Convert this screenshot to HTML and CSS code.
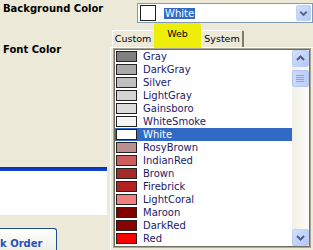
FILE: index.html
```html
<!DOCTYPE html>
<html lang="en">

<head>
    <meta charset="UTF-8">
    <meta name="viewport" content="width=device-width, initial-scale=1.0">
    <title>Color Picker</title>
    <link rel="stylesheet" href="styles.css">
</head>

<body>

    <div class="top-row">
        <div class="field-label">Background Color</div>
        <div class="combo">
            <span class="combo-swatch"></span>
            <span class="combo-text">White</span>
            <span class="combo-btn">
                <svg width="14" height="14" viewBox="0 0 14 14"><polyline points="3.5,5.5 7,9 10.5,5.5" fill="none" stroke="#4d6185" stroke-width="2"/></svg>
            </span>
        </div>
    </div>

    <div class="main">
        <!-- 左側：ラベルと下のパネル -->
        <div class="left-pane">
            <div class="field-label font-label">Font Color</div>
            <div class="blue-bar"></div>
            <div class="white-panel"></div>
            <button class="order-btn">k Order</button>
        </div>

        <!-- タブ付きの色リスト -->
        <div class="tab-control">
            <div class="tab-strip">
                <div class="tab tab-custom">Custom</div>
                <div class="tab tab-active">Web</div>
                <div class="tab tab-system">System</div>
            </div>
            <div class="tab-page">
                <div class="color-list">
                    <ul class="color-rows">
                        <li class="color-row"><span class="swatch" style="background:#808080"></span>Gray</li>
                        <li class="color-row"><span class="swatch" style="background:#a9a9a9"></span>DarkGray</li>
                        <li class="color-row"><span class="swatch" style="background:#c0c0c0"></span>Silver</li>
                        <li class="color-row"><span class="swatch" style="background:#d3d3d3"></span>LightGray</li>
                        <li class="color-row"><span class="swatch" style="background:#dcdcdc"></span>Gainsboro</li>
                        <li class="color-row"><span class="swatch" style="background:#f5f5f5"></span>WhiteSmoke</li>
                        <li class="color-row selected"><span class="swatch" style="background:#ffffff"></span>White</li>
                        <li class="color-row"><span class="swatch" style="background:#bc8f8f"></span>RosyBrown</li>
                        <li class="color-row"><span class="swatch" style="background:#cd5c5c"></span>IndianRed</li>
                        <li class="color-row"><span class="swatch" style="background:#a52a2a"></span>Brown</li>
                        <li class="color-row"><span class="swatch" style="background:#b22222"></span>Firebrick</li>
                        <li class="color-row"><span class="swatch" style="background:#f08080"></span>LightCoral</li>
                        <li class="color-row"><span class="swatch" style="background:#800000"></span>Maroon</li>
                        <li class="color-row"><span class="swatch" style="background:#8b0000"></span>DarkRed</li>
                        <li class="color-row"><span class="swatch" style="background:#ff0000"></span>Red</li>
                    </ul>
                    <div class="scrollbar">
                        <span class="scroll-btn">
                            <svg width="15" height="15" viewBox="0 0 15 15"><polyline points="4,9 7.5,5.5 11,9" fill="none" stroke="#4d6185" stroke-width="2"/></svg>
                        </span>
                        <span class="scroll-thumb">
                            <svg width="9" height="8" viewBox="0 0 9 8"><path d="M0 0.5h8M0 2.5h8M0 4.5h8M0 6.5h8" stroke="#8aa3e0" stroke-width="1"/></svg>
                        </span>
                        <span class="scroll-track"></span>
                        <span class="scroll-btn">
                            <svg width="15" height="15" viewBox="0 0 15 15"><polyline points="4,6 7.5,9.5 11,6" fill="none" stroke="#4d6185" stroke-width="2"/></svg>
                        </span>
                    </div>
                </div>
            </div>
        </div>
    </div>

</body>

</html>
```

FILE: styles.css
```css
body {
    margin: 0;
    width: 313px;
    height: 250px;
    overflow: hidden;
    background-color: #ece9d8;
    font-family: "DejaVu Sans", "Liberation Sans", sans-serif;
    font-size: 10px;
    color: #000;
}

/* 上の行 */
.top-row {
    display: flex;
    padding-top: 3px;
    height: 20px;
}

.field-label {
    width: 137px;
    padding-left: 3px;
    box-sizing: border-box;
    font-weight: bold;
    line-height: 12px;
}

.combo {
    width: 176px;
    height: 20px;
    box-sizing: border-box;
    border: 1px solid #7f9db9;
    background-color: #fff;
    display: flex;
    align-items: center;
}

.combo-swatch {
    width: 16px;
    height: 16px;
    box-sizing: border-box;
    border: 1px solid #222;
    margin-left: 2px;
    background-color: #fff;
}

.combo-text {
    margin-left: 8px;
    padding: 0 1px;
    line-height: 11px;
    background-color: #316ac5;
    color: #fff;
}

.combo-btn {
    margin-left: auto;
    margin-right: 1px;
    width: 15px;
    height: 16px;
    box-sizing: border-box;
    border: 1px solid #bcd0f8;
    border-radius: 2px;
    background: linear-gradient(135deg, #d3e0fd, #b4c8f6);
    display: flex;
    align-items: center;
    justify-content: center;
}

/* 下の部分 */
.main {
    display: flex;
}

.left-pane {
    width: 110px;
    display: flex;
    flex-direction: column;
}

.font-label {
    margin-top: 21px;
}

.blue-bar {
    width: 107px;
    height: 4px;
    margin-top: 111px;
    background: linear-gradient(#0a2fb4, #0f46d8);
}

.white-panel {
    width: 107px;
    height: 44px;
    background-color: #fff;
}

.order-btn {
    margin: 13px 0 0 -12px;
    width: 69px;
    height: 22px;
    box-sizing: border-box;
    padding: 8px 0 0 11px;
    border: 1px solid #1b4d8c;
    border-bottom: none;
    border-radius: 3px 3px 0 0;
    background: linear-gradient(#ffffff, #f0efe8);
    font-family: "DejaVu Sans", "Liberation Sans", sans-serif;
    font-size: 10px;
    font-weight: bold;
    line-height: 12px;
    color: #2553b8;
    text-align: left;
}

/* タブ */
.tab-control {
    width: 203px;
    display: flex;
    flex-direction: column;
}

.tab-strip {
    height: 24px;
    display: flex;
    align-items: flex-end;
    padding-left: 2px;
}

.tab {
    height: 17px;
    box-sizing: border-box;
    border-top: 1px solid #fff;
    border-left: 1px solid #fff;
    border-radius: 2px 2px 0 0;
    font-size: 9.5px;
    line-height: 16px;
    text-align: center;
}

.tab-custom {
    width: 41px;
}

.tab-active {
    width: 47px;
    height: 25px;
    margin-left: 1px;
    margin-bottom: -1px;
    padding-top: 3px;
    background-color: #eeee0a;
    border: none;
    position: relative;
}

.tab-system {
    width: 43px;
    border-right: 2px solid #7d7b70;
}

.tab-page {
    flex: 1;
    border-top: 1px solid #fff;
    border-left: 1px solid #fff;
    padding-left: 2px;
}

.color-list {
    width: 198px;
    height: 200px;
    box-sizing: border-box;
    border: 1px solid #aca899;
    padding: 1px;
    box-shadow: inset 0 0 0 1px #716f64;
    background-color: #fff;
    display: flex;
}

.color-rows {
    flex: 1;
    margin: 0;
    padding: 0;
    list-style: none;
    overflow: hidden;
}

.color-row {
    height: 13px;
    display: flex;
    align-items: center;
    line-height: 13px;
    color: #1c2066;
    white-space: nowrap;
}

.color-row.selected {
    background-color: #316ac5;
    color: #fff;
}

.swatch {
    width: 21px;
    height: 11px;
    box-sizing: border-box;
    border: 1px solid #222;
    margin: 0 6px 0 1px;
}

/* スクロールバー */
.scrollbar {
    width: 17px;
    display: flex;
    flex-direction: column;
    background: linear-gradient(to right, #f1efe6, #fdfdfa);
}

.scroll-btn {
    height: 17px;
    box-sizing: border-box;
    border: 1px solid #bcd0f8;
    border-radius: 2px;
    background: linear-gradient(135deg, #d3e0fd, #b4c8f6);
    display: flex;
    align-items: center;
    justify-content: center;
}

.scroll-thumb {
    height: 17px;
    margin-top: 3px;
    box-sizing: border-box;
    border: 1px solid #b2c6f5;
    border-radius: 2px;
    background: linear-gradient(to right, #cbd9fc, #bccdf8);
    display: flex;
    align-items: center;
    justify-content: center;
}

.scroll-track {
    flex: 1;
}
```
